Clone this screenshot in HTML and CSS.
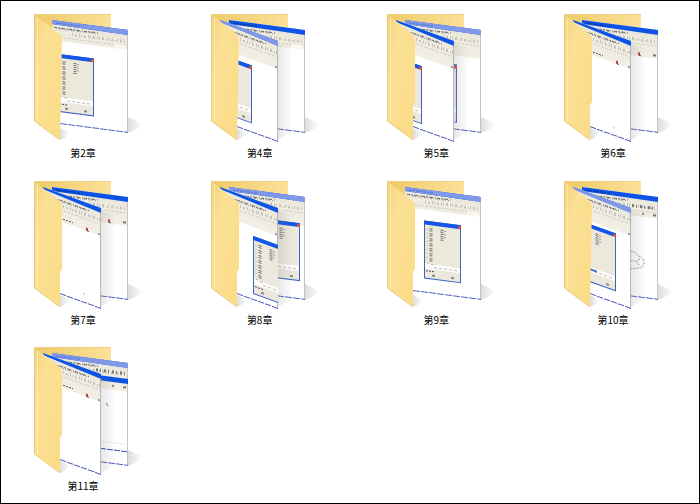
FILE: index.html
```html
<!DOCTYPE html>
<html lang="zh-CN">
  <head>
    <meta charset="utf-8">
    <title>章节</title>
    <link rel="stylesheet" href="styles.css">
  </head>
  <body>
    <!-- shared parts of the folder icons -->
    <svg class="defs" width="0" height="0" aria-hidden="true">
      <defs>
        <linearGradient id="flapFill" x1="0" y1="0" x2="1" y2="1">
          <stop offset="0" stop-color="#f3d27b"/>
          <stop offset="0.3" stop-color="#fbe095"/>
          <stop offset="1" stop-color="#fbdc85"/>
        </linearGradient>
        <linearGradient id="backFill" x1="0" y1="0" x2="1" y2="0">
          <stop offset="0" stop-color="#edc968"/>
          <stop offset="1" stop-color="#fde199"/>
        </linearGradient>
        <linearGradient id="shade" x1="0" y1="0" x2="1" y2="0">
          <stop offset="0" stop-color="#777" stop-opacity="0.25"/>
          <stop offset="1" stop-color="#777" stop-opacity="0"/>
        </linearGradient>
        <linearGradient id="pageFill" x1="0" y1="0" x2="0" y2="1">
          <stop offset="0" stop-color="#e9e6da"/>
          <stop offset="1" stop-color="#f3efe4"/>
        </linearGradient>
        <clipPath id="backClip"><path d="M0 0H76V104H0z"/></clipPath>
        <clipPath id="frontClip"><path d="M0 0H58V102H0z"/></clipPath>

        <g id="back">
          <path d="M0 0H77V60H20z" fill="url(#backFill)"/>
          <path d="M0 .5H77" stroke="#f0d080"/>
          <path d="M94 119V103L109 110Q103 116 94 119z" fill="url(#shade)"/>
          <path d="M26 126V114L36 119Q32 124 26 126z" fill="url(#shade)"/>
        </g>
        <g id="flap">
          <path d="M0 0L24 19Q28 21 28 25V88L26 91V126L0 107z" fill="url(#flapFill)"/>
          <path d="M3.500 4V108" stroke="#fff0bd" opacity=".7"/>
          <path d="M.5 1V107L26 126" stroke="#e6c670" fill="none" opacity=".8"/>
        </g>
        <g id="flapPlain">
          <path d="M0 0L24 19Q28 21 28 25L26 126L0 107z" fill="url(#flapFill)"/>
          <path d="M3.500 4V108" stroke="#fff0bd" opacity=".7"/>
          <path d="M.5 1V107L26 126" stroke="#e6c670" fill="none" opacity=".8"/>
        </g>
        <path id="castShade" d="M67 30L82 34V117L67 126z" fill="url(#shade)" opacity=".7"/>

        <!-- menu text and tool buttons -->
        <g id="bars" fill="none">
          <path d="M2 7H46" stroke="#666" stroke-dasharray="3 1 2 1 4 2 1 1"/>
          <path d="M4 8H44" stroke="#999" stroke-dasharray="1 2 2 1"/>
          <path d="M20 12H74" stroke="#c3c1b8" stroke-width="3" stroke-dasharray="1 2 2 2 1 1"/>
          <path d="M3 11H74" stroke="#fbfaf5" stroke-dasharray="2 4 1 3"/>
          <path d="M0 16.500H74" stroke="#d3d0c2" stroke-dasharray="3 1"/>
        </g>

        <!-- layer dialog -->
        <g id="dialog">
          <path d="M0 0H37V58H0z" fill="#3f62c8"/>
          <path d="M0 0H37V4H0z" fill="#1257e8"/>
          <path d="M34 1H37V4H34z" fill="#e0503a"/>
          <path d="M1 4H36V57H1z" fill="#ece8dc"/>
          <path d="M1 43H36V48H1z" fill="#fdfdfb"/>
          <path d="M7 7V40" stroke="#666" stroke-width="3" stroke-dasharray="1 1 1 2" fill="none"/>
          <path d="M3 8V40" stroke="#7fa886" stroke-dasharray="1 3" fill="none"/>
          <path d="M18 7V19" stroke="#777" stroke-width="3" stroke-dasharray="1 1" fill="none"/>
          <path d="M21 8V16" stroke="#999" stroke-width="2" stroke-dasharray="1 2" fill="none"/>
          <path d="M3 42H5M7 43H11M10 46H34" stroke="#bbb" stroke-dasharray="3 2" fill="none"/>
          <path d="M2 50H10" stroke="#555" stroke-dasharray="2 1" fill="none"/>
          <path d="M8 54H11M27 54H30" stroke="#888" stroke-width="2" fill="none"/>
        </g>

        <g id="pageBack">
          <path d="M0 0H76V103H0z" fill="#fff"/>
          <path d="M0 0H76V29H0z" fill="url(#pageFill)"/>
          <use href="#bars"/>
          <path d="M0 0H76V5L0 4z" fill="#0c53e6"/>
          <path d="M4 2.500H28" stroke="#07318f" stroke-dasharray="3 1 2 1"/>
          <path d="M75.500 5V103" stroke="#c3c3ca"/>
          <path d="M8 102.500H76" stroke="#5264bd" stroke-dasharray="7 1"/>
        </g>
        <g id="pageBackDim">
          <use href="#pageBack"/>
          <path d="M0 0H76V5L0 4z" fill="#7f98e8"/>
          <path d="M4 2.500H28" stroke="#5874c8" stroke-dasharray="3 1 2 1"/>
        </g>
        <g id="pageFront">
          <path d="M0 0H58V101H0z" fill="#fff"/>
          <path d="M0 0H58V28H0z" fill="url(#pageFill)"/>
          <g clip-path="url(#frontClip)"><use href="#bars"/></g>
          <path d="M0 0H58V5L0 2z" fill="#0c53e6"/>
          <path d="M57.500 5V101" stroke="#b8b8c2"/>
          <path d="M17 100.500H58" stroke="#4557b8" stroke-dasharray="6 1"/>
          <path d="M55 27H57" stroke="#999" stroke-width="2"/>
        </g>
        <g id="pageFrontDim">
          <use href="#pageFront"/>
          <path d="M0 0H58V5L0 2z" fill="#7f98e8"/>
        </g>
        <g id="redMark">
          <path d="M0 0H2V3H0z" fill="#c33a3a"/>
          <path d="M1 3H3" stroke="#555"/>
        </g>
      </defs>
    </svg>

    <ul class="files">
      <li class="folder">
        <svg class="icon" viewBox="0 0 98 131" aria-hidden="true">
          <use href="#back"/>
          <g transform="matrix(1 .13 0 1 18 6)">
            <use href="#pageBackDim"/>
            <path d="M0 20H75V30H0z" fill="#fff"/>
            <path d="M62 16H74V20H62z" fill="#f8f6ee"/>
            <use href="#dialog" x="5" y="33"/>
          </g>
          <use href="#flapPlain"/>
        </svg>
        <span class="name">第2章</span>
      </li>
      <li class="folder">
        <svg class="icon" viewBox="0 0 98 131" aria-hidden="true">
          <use href="#back"/>
          <g transform="matrix(1 .13 0 1 18 6)">
            <use href="#pageBack"/>
            <path d="M0 20H75V30H0z" fill="#fff"/>
            <path d="M62 16H74V20H62z" fill="#f8f6ee"/>
          </g>
          <use href="#castShade"/>
          <g transform="matrix(1 .36 0 1 9 6)">
            <use href="#pageFrontDim"/>
            <use href="#dialog" x="-5" y="34"/>
          </g>
          <use href="#flapPlain"/>
        </svg>
        <span class="name">第4章</span>
      </li>
      <li class="folder">
        <svg class="icon" viewBox="0 0 98 131" aria-hidden="true">
          <use href="#back"/>
          <g transform="matrix(1 .13 0 1 18 6)">
            <use href="#pageBackDim"/>
            <use href="#dialog" x="15" y="38"/>
          </g>
          <use href="#castShade"/>
          <g transform="matrix(1 .36 0 1 9 6)">
            <use href="#pageFront"/>
            <g clip-path="url(#frontClip)"><use href="#dialog" x="-11" y="37"/></g>
          </g>
          <use href="#flap"/>
        </svg>
        <span class="name">第5章</span>
      </li>
      <li class="folder">
        <svg class="icon" viewBox="0 0 98 131" aria-hidden="true">
          <use href="#back"/>
          <g transform="matrix(1 .13 0 1 18 6)">
            <use href="#pageBack"/>
            <use href="#redMark" x="56" y="25"/>
            <path d="M71 26H74" stroke="#777" stroke-width="2"/>
          </g>
          <use href="#castShade"/>
          <g transform="matrix(1 .36 0 1 9 6)">
            <use href="#pageFront"/>
            <path d="M20 25H30" stroke="#555" stroke-dasharray="2 1"/>
            <use href="#redMark" x="43" y="25"/>
            <path d="M41 92V94" stroke="#bbb"/>
          </g>
          <use href="#flap"/>
        </svg>
        <span class="name">第6章</span>
      </li>
      <li class="folder">
        <svg class="icon" viewBox="0 0 98 131" aria-hidden="true">
          <use href="#back"/>
          <g transform="matrix(1 .13 0 1 18 6)">
            <use href="#pageBack"/>
            <use href="#redMark" x="56" y="25"/>
            <path d="M71 26H74" stroke="#777" stroke-width="2"/>
          </g>
          <use href="#castShade"/>
          <g transform="matrix(1 .36 0 1 9 6)">
            <use href="#pageFront"/>
            <path d="M20 25H30" stroke="#555" stroke-dasharray="2 1"/>
            <use href="#redMark" x="43" y="25"/>
            <path d="M41 91V93" stroke="#aaa"/>
          </g>
          <use href="#flap"/>
        </svg>
        <span class="name">第7章</span>
      </li>
      <li class="folder">
        <svg class="icon" viewBox="0 0 98 131" aria-hidden="true">
          <use href="#back"/>
          <g transform="matrix(1 .13 0 1 18 6)">
            <use href="#pageBackDim"/>
            <use href="#dialog" x="34" y="27"/>
          </g>
          <use href="#castShade"/>
          <g transform="matrix(1 .36 0 1 9 6)">
            <use href="#pageFront"/>
            <g clip-path="url(#frontClip)"><use href="#dialog" x="33" y="37"/></g>
          </g>
          <use href="#flap"/>
        </svg>
        <span class="name">第8章</span>
      </li>
      <li class="folder">
        <svg class="icon" viewBox="0 0 98 131" aria-hidden="true">
          <use href="#back"/>
          <g transform="matrix(1 .13 0 1 18 6)">
            <use href="#pageBackDim"/>
            <path d="M0 20H75V30H0z" fill="#fff"/>
            <path d="M62 16H74V20H62z" fill="#f8f6ee"/>
            <use href="#dialog" x="19" y="31"/>
          </g>
          <use href="#flap"/>
        </svg>
        <span class="name">第9章</span>
      </li>
      <li class="folder">
        <svg class="icon" viewBox="0 0 98 131" aria-hidden="true">
          <use href="#back"/>
          <g transform="matrix(1 .13 0 1 18 6)">
            <use href="#pageBack"/>
            <path d="M0 22H75V30H0z" fill="#fff"/>
            <path d="M50 12H74" stroke="#777" stroke-width="3" stroke-dasharray="2 2 1 3"/>
            <path d="M60 19H62" stroke="#6a9a72" stroke-width="2"/>
            <path d="M71 19H74" stroke="#777" stroke-width="2"/>
          </g>
          <use href="#castShade"/>
          <path d="M67 70Q72 71 74 75Q80 76 80 82Q79 88 72 87L67 88M67 80H73M76 78A3 3 0 1 0 76 84" fill="none" stroke="#999" stroke-dasharray="2 1"/>
          <g transform="matrix(1 .36 0 1 9 6)">
            <use href="#pageFrontDim"/>
            <use href="#dialog" x="6" y="31"/>
            <path d="M16 76H24" stroke="#3a6fd8" stroke-width="2"/>
          </g>
          <use href="#flapPlain"/>
        </svg>
        <span class="name">第10章</span>
      </li>
      <li class="folder">
        <svg class="icon" viewBox="0 0 98 131" aria-hidden="true">
          <use href="#back"/>
          <g transform="matrix(1 .13 0 1 18 6)">
            <use href="#pageBackDim"/>
            <path d="M44 11H74" stroke="#777" stroke-width="3" stroke-dasharray="2 2 1 3"/>
            <path d="M0 16H76V21H0z" fill="#0c53e6"/>
            <path d="M60 25H62" stroke="#6a9a72" stroke-width="2"/>
            <path d="M71 25H74" stroke="#777" stroke-width="2"/>
            <path d="M54 43L56 46" stroke="#888"/>
            <path d="M50 82H73" stroke="#ddd" stroke-dasharray="2 1"/>
            <path d="M48 89H76" stroke="#3548b0" stroke-dasharray="6 1"/>
          </g>
          <use href="#castShade"/>
          <g transform="matrix(1 .36 0 1 9 6)">
            <use href="#pageFront"/>
            <path d="M20 25H30" stroke="#555" stroke-dasharray="2 1"/>
            <use href="#redMark" x="43" y="25"/>
          </g>
          <use href="#flap"/>
        </svg>
        <span class="name">第11章</span>
      </li>
    </ul>
  </body>
</html>
```

FILE: styles.css
```css
* {
  box-sizing: border-box;
}

body {
  margin: 0;
  background: #fff;
  color: #000;
  font-family: "Noto Sans CJK SC", sans-serif;
}

.defs {
  position: absolute; /* keeps the definitions out of the page flow */
}

.files {
  display: grid;
  grid-template-columns: repeat(4, 98px);
  justify-content: space-between;
  align-content: space-between;
  row-gap: 16px;
  min-height: 100vh;
  margin: 0;
  padding: 13px 37px 9px 33px;
  border: 1px solid #000;
  list-style: none;
}

.folder {
  display: flex;
  flex-direction: column;
  align-items: center;
}

.icon {
  width: 98px;
  height: 131px;
  overflow: visible;
}

.name {
  font-size: 10px;
  line-height: 16px;
}
```
